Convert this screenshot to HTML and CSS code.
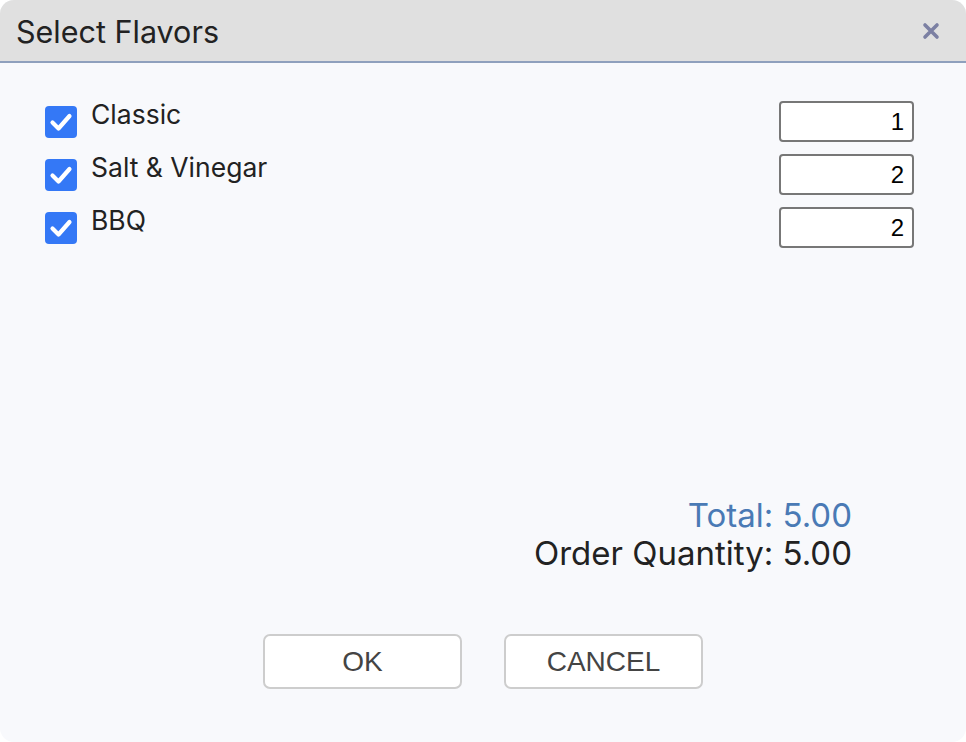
FILE: index.html
```html
<!DOCTYPE html>
<html>
<head>
<meta charset="utf-8">
<link rel="stylesheet" href="styles.css">
</head>
<body>
<div class="dialog">
  <div class="header">
    <div class="title">Select Flavors</div>
    <svg class="close" width="18" height="18" viewBox="0 0 18 18"><path d="M3 3 L15 15 M15 3 L3 15" stroke="#7c80a3" stroke-width="3.6" stroke-linecap="round"/></svg>
  </div>
  <div class="body">
    <div class="rows">
      <div class="row">
        <div class="item">
          <svg class="check" width="32" height="32" viewBox="0 0 32 32"><rect width="32" height="32" rx="4" fill="#3478f6"/><path d="M7.5 16.5 L13.5 22.5 L24.5 10" fill="none" stroke="#fff" stroke-width="4.2" stroke-linecap="round" stroke-linejoin="round"/></svg>
          <span class="label">Classic</span>
        </div>
        <div class="qty">1</div>
      </div>
      <div class="row">
        <div class="item">
          <svg class="check" width="32" height="32" viewBox="0 0 32 32"><rect width="32" height="32" rx="4" fill="#3478f6"/><path d="M7.5 16.5 L13.5 22.5 L24.5 10" fill="none" stroke="#fff" stroke-width="4.2" stroke-linecap="round" stroke-linejoin="round"/></svg>
          <span class="label">Salt &amp; Vinegar</span>
        </div>
        <div class="qty">2</div>
      </div>
      <div class="row">
        <div class="item">
          <svg class="check" width="32" height="32" viewBox="0 0 32 32"><rect width="32" height="32" rx="4" fill="#3478f6"/><path d="M7.5 16.5 L13.5 22.5 L24.5 10" fill="none" stroke="#fff" stroke-width="4.2" stroke-linecap="round" stroke-linejoin="round"/></svg>
          <span class="label">BBQ</span>
        </div>
        <div class="qty">2</div>
      </div>
    </div>
    <div class="totals">
      <div class="total">Total: 5.00</div>
      <div class="order">Order Quantity: 5.00</div>
    </div>
    <div class="buttons">
      <div class="btn">OK</div>
      <div class="btn">CANCEL</div>
    </div>
  </div>
</div>
</body>
</html>
```
FILE: styles.css
```css
html, body {
  margin: 0;
  padding: 0;
  background: #ffffff;
}
.dialog {
  width: 966px;
  height: 742px;
  border-radius: 14px;
  overflow: hidden;
  background: #f8f9fc;
  display: flex;
  flex-direction: column;
  font-family: Inter, "Liberation Sans", sans-serif;
  color: #222;
}
.header {
  height: 61px;
  flex: none;
  background: #e0e0e0;
  border-bottom: 2px solid #8fa0bd;
  display: flex;
  align-items: center;
  justify-content: space-between;
  padding: 0 26px 0 16px;
}
.title {
  font-size: 30.5px;
  color: #222;
  padding-top: 1px;
}
.close {
  display: block;
}
.body {
  flex: 1;
  display: flex;
  flex-direction: column;
  padding: 38px 52px 53px 45px;
}
.rows {
  display: flex;
  flex-direction: column;
  gap: 12px;
}
.row {
  display: flex;
  justify-content: space-between;
  align-items: flex-start;
  height: 41px;
}
.item {
  display: flex;
  align-items: flex-start;
  margin-top: -3px;
}
.check {
  display: block;
  margin-top: 8px;
}
.label {
  margin-left: 14px;
  font-size: 26.5px;
  line-height: 32px;
  color: #222;
}
.qty {
  width: 135px;
  height: 41px;
  box-sizing: border-box;
  border: 2px solid #777;
  border-radius: 4px;
  background: #fff;
  font-family: "Liberation Sans", Arial, sans-serif;
  font-size: 24px;
  line-height: 38px;
  text-align: right;
  padding-right: 8px;
  color: #000;
}
.totals {
  margin-top: auto;
  text-align: right;
  padding-right: 62px;
  font-size: 33px;
  line-height: 38px;
}
.total {
  color: #4a7ab5;
}
.order {
  color: #222;
}
.buttons {
  margin-top: 62px;
  display: flex;
  justify-content: center;
  gap: 42px;
  margin-left: -45px;
  margin-right: -52px;
}
.btn {
  width: 199px;
  height: 55px;
  box-sizing: border-box;
  border: 2px solid #cdcdcd;
  border-radius: 7px;
  background: #fff;
  font-family: "Liberation Sans", Arial, sans-serif;
  font-size: 28px;
  line-height: 51px;
  text-align: center;
  color: #444;
}
```
